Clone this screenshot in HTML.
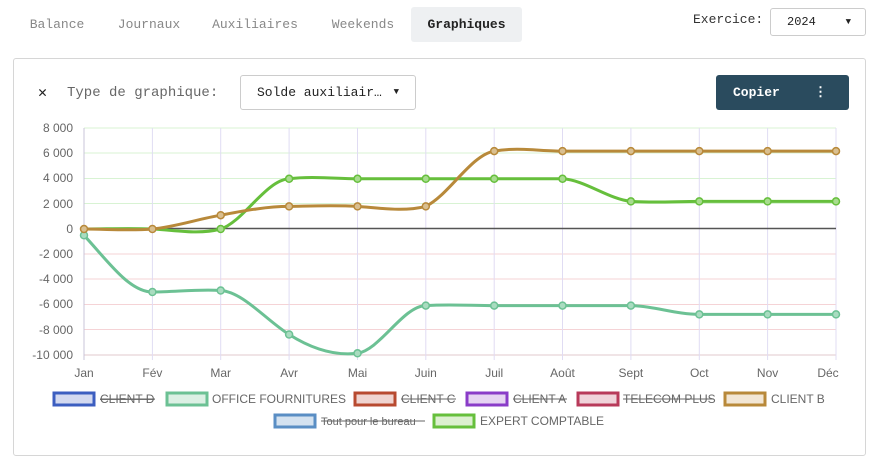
<!DOCTYPE html>
<html><head><meta charset="utf-8"><style>
body{margin:0;width:876px;height:463px;background:#fff;font-family:"Liberation Mono",monospace;overflow:hidden;position:relative}
.tab{position:absolute;top:7px;height:35px;line-height:35px;font-size:13px;color:#888;text-align:center}
.act{background:#eef0f2;color:#222;font-weight:bold;border-radius:3px}
.card{position:absolute;left:13px;top:58px;width:851px;height:396px;border:1px solid #d6d6d6;border-radius:3px}
.lbl{position:absolute;font-size:14px;color:#666}
.sel{position:absolute;border:1px solid #ccc;border-radius:3px;background:#fff;font-size:13px;color:#222}
svg text{font-family:"Liberation Sans",sans-serif}
</style></head><body>
<div class="tab" style="left:18px;width:78px">Balance</div>
<div class="tab" style="left:106px;width:86px">Journaux</div>
<div class="tab" style="left:200px;width:110px">Auxiliaires</div>
<div class="tab" style="left:320px;width:86px">Weekends</div>
<div class="tab act" style="left:411px;width:111px">Graphiques</div>
<div class="lbl" style="left:693px;top:12px;color:#333;font-size:13px">Exercice:</div>
<div class="sel" style="left:770px;top:8px;width:94px;height:26px;line-height:26px"><span style="margin-left:16px;font-size:12px">2024</span><span style="position:absolute;right:14px;font-size:9px">▼</span></div>
<div class="card">
<div class="lbl" style="left:24px;top:24px;color:#222;font-size:15px">✕</div>
<div class="lbl" style="left:53px;top:26px">Type de graphique:</div>
<div class="sel" style="left:226px;top:16px;width:174px;height:33px;line-height:33px"><span style="margin-left:16px">Solde auxiliair…</span><span style="position:absolute;right:16px;font-size:9px">▼</span></div>
<div style="position:absolute;left:702px;top:16px;width:133px;height:35px;background:#2a4b5e;border-radius:3px;color:#fff;font-size:13px;font-weight:bold;line-height:35px"><span style="margin-left:17px">Copier</span><span style="position:absolute;right:22px">⋮</span></div>
</div>
<svg style="position:absolute;left:0;top:0" width="876" height="463">
<g stroke-width="1">
<line x1="84" x2="836" y1="128" y2="128" stroke="#d8f3d3"/>
<line x1="84" x2="836" y1="153" y2="153" stroke="#d8f3d3"/>
<line x1="84" x2="836" y1="178.5" y2="178.5" stroke="#d8f3d3"/>
<line x1="84" x2="836" y1="203.5" y2="203.5" stroke="#d8f3d3"/>
<line x1="84" x2="836" y1="254" y2="254" stroke="#f5d3d6"/>
<line x1="84" x2="836" y1="279" y2="279" stroke="#f5d3d6"/>
<line x1="84" x2="836" y1="304.5" y2="304.5" stroke="#f5d3d6"/>
<line x1="84" x2="836" y1="329.5" y2="329.5" stroke="#f5d3d6"/>
<line x1="84" x2="836" y1="355" y2="355" stroke="#e0c8cc"/>
<g stroke="#e0dcf3">
<line x1="152.4" x2="152.4" y1="128" y2="360"/><line x1="220.7" x2="220.7" y1="128" y2="360"/><line x1="289.1" x2="289.1" y1="128" y2="360"/><line x1="357.5" x2="357.5" y1="128" y2="360"/><line x1="425.8" x2="425.8" y1="128" y2="360"/><line x1="494.2" x2="494.2" y1="128" y2="360"/><line x1="562.5" x2="562.5" y1="128" y2="360"/><line x1="630.9" x2="630.9" y1="128" y2="360"/><line x1="699.3" x2="699.3" y1="128" y2="360"/><line x1="767.6" x2="767.6" y1="128" y2="360"/><line x1="836" x2="836" y1="128" y2="360"/>
</g>
<line x1="84" x2="84" y1="128" y2="360" stroke="#c8c4d8"/>
<line x1="84" x2="836" y1="228.5" y2="228.5" stroke="#555" stroke-width="1.5"/>
</g>
<g font-size="12" fill="#666" text-anchor="end">
<text x="73" y="132">8 000</text><text x="73" y="157">6 000</text><text x="73" y="182">4 000</text><text x="73" y="208">2 000</text><text x="73" y="233">0</text><text x="73" y="258">-2 000</text><text x="73" y="283">-4 000</text><text x="73" y="308">-6 000</text><text x="73" y="334">-8 000</text><text x="73" y="359">-10 000</text>
</g>
<g font-size="12" fill="#666" text-anchor="middle">
<text x="84" y="377">Jan</text><text x="152.4" y="377">Fév</text><text x="220.7" y="377">Mar</text><text x="289.1" y="377">Avr</text><text x="357.5" y="377">Mai</text><text x="425.8" y="377">Juin</text><text x="494.2" y="377">Juil</text><text x="562.5" y="377">Août</text><text x="630.9" y="377">Sept</text><text x="699.3" y="377">Oct</text><text x="767.6" y="377">Nov</text><text x="828" y="377">Déc</text>
</g>
<g fill="none" stroke-width="3">
<path stroke="#6cc194" d="M84,235.3 C107,260 129,292 152.4,292 C175,292 198,289 220.7,290.5 C243,292 266,320 289.1,334.5 C312,349 335,356 357.5,353.3 C380,350 403,306 425.8,305.6 C449,304 471,305.6 494.2,305.6 L630.9,305.6 C654,306 676,314.4 699.3,314.4 L836,314.4"/>
<path stroke="#66bf3c" d="M84,229 C107,229 129,228 152.4,229 C175,230 198,235 220.7,229 C243,222 266,180 289.1,178.8 C312,176 335,178.8 357.5,178.8 L562.5,178.8 C585,180 608,199 630.9,201.4 C654,203 676,201.4 699.3,201.4 L836,201.4"/>
<path stroke="#b8893a" d="M84,229 C107,229 129,231 152.4,229 C175,227 198,219 220.7,215.2 C243,211 266,206.4 289.1,206.4 C312,206 335,205 357.5,206.4 C380,208 403,212 425.8,206.4 C449,195 471,155 494.2,151.1 C517,147 540,151.1 562.5,151.1 L836,151.1"/>
</g>
<g stroke-width="1.5">
<g fill="#a9dcc0" stroke="#6cc194"><circle cx="84" cy="235.3" r="3.5"/><circle cx="152.4" cy="292" r="3.5"/><circle cx="220.7" cy="290.5" r="3.5"/><circle cx="289.1" cy="334.5" r="3.5"/><circle cx="357.5" cy="353.3" r="3.5"/><circle cx="425.8" cy="305.6" r="3.5"/><circle cx="494.2" cy="305.6" r="3.5"/><circle cx="562.5" cy="305.6" r="3.5"/><circle cx="630.9" cy="305.6" r="3.5"/><circle cx="699.3" cy="314.4" r="3.5"/><circle cx="767.6" cy="314.4" r="3.5"/><circle cx="836" cy="314.4" r="3.5"/></g>
<g fill="#a8dc8f" stroke="#66bf3c"><circle cx="220.7" cy="229" r="3.5"/><circle cx="289.1" cy="178.8" r="3.5"/><circle cx="357.5" cy="178.8" r="3.5"/><circle cx="425.8" cy="178.8" r="3.5"/><circle cx="494.2" cy="178.8" r="3.5"/><circle cx="562.5" cy="178.8" r="3.5"/><circle cx="630.9" cy="201.4" r="3.5"/><circle cx="699.3" cy="201.4" r="3.5"/><circle cx="767.6" cy="201.4" r="3.5"/><circle cx="836" cy="201.4" r="3.5"/></g>
<g fill="#d9bf90" stroke="#b8893a"><circle cx="84" cy="229" r="3.5"/><circle cx="152.4" cy="229" r="3.5"/><circle cx="220.7" cy="215.2" r="3.5"/><circle cx="289.1" cy="206.4" r="3.5"/><circle cx="357.5" cy="206.4" r="3.5"/><circle cx="425.8" cy="206.4" r="3.5"/><circle cx="494.2" cy="151.1" r="3.5"/><circle cx="562.5" cy="151.1" r="3.5"/><circle cx="630.9" cy="151.1" r="3.5"/><circle cx="699.3" cy="151.1" r="3.5"/><circle cx="767.6" cy="151.1" r="3.5"/><circle cx="836" cy="151.1" r="3.5"/></g>
</g>
<g stroke-width="3" font-size="12" fill="#666">
<rect x="54" y="393" width="40" height="12" fill="#d3d9f0" stroke="#3c5ec0"/>
<text x="100" y="403" text-decoration="line-through">CLIENT D</text><line x1="100" x2="155" y1="399" y2="399" stroke="#666" stroke-width="1"/>
<rect x="167" y="393" width="40" height="12" fill="#dcf0e4" stroke="#6cc194"/>
<text x="212" y="403">OFFICE FOURNITURES</text>
<rect x="355" y="393" width="40" height="12" fill="#f0d4d0" stroke="#b84a30"/>
<text x="401" y="403">CLIENT C</text><line x1="401" x2="456" y1="399" y2="399" stroke="#666" stroke-width="1"/>
<rect x="467" y="393" width="40" height="12" fill="#e6d4f2" stroke="#8a3cc8"/>
<text x="513" y="403">CLIENT A</text><line x1="513" x2="567" y1="399" y2="399" stroke="#666" stroke-width="1"/>
<rect x="578" y="393" width="40" height="12" fill="#f0d3da" stroke="#b83a5a"/>
<text x="623" y="403">TELECOM PLUS</text><line x1="623" x2="714" y1="399" y2="399" stroke="#666" stroke-width="1"/>
<rect x="725" y="393" width="40" height="12" fill="#f2e6d4" stroke="#b8893a"/>
<text x="771" y="403">CLIENT B</text>
<rect x="275" y="415" width="40" height="12" fill="#d4e2f0" stroke="#5a8ec4"/>
<text x="321" y="425" font-size="11">Tout pour le bureau</text><line x1="321" x2="425" y1="421" y2="421" stroke="#666" stroke-width="1"/>
<rect x="434" y="415" width="40" height="12" fill="#dcf0d0" stroke="#66bf3c"/>
<text x="480" y="425">EXPERT COMPTABLE</text>
</g>
</svg>
</body></html>
